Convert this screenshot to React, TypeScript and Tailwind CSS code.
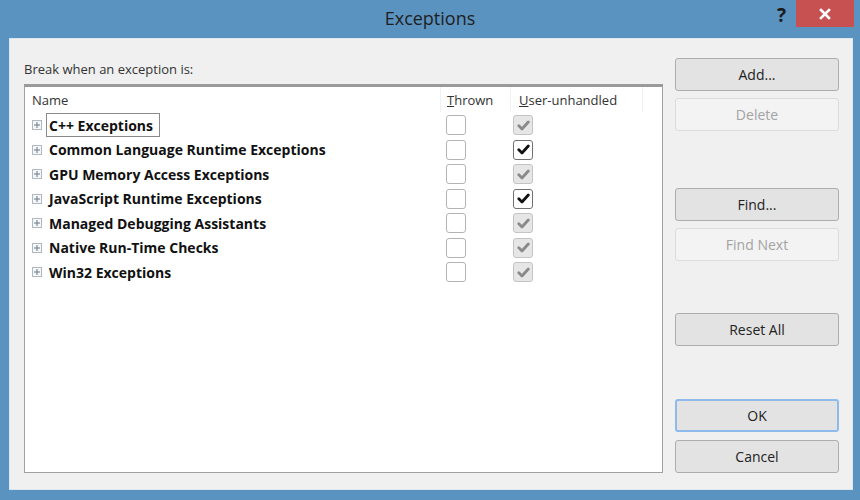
const rows: { name: string; enabled: boolean }[] = [
  { name: 'C++ Exceptions', enabled: false },
  { name: 'Common Language Runtime Exceptions', enabled: true },
  { name: 'GPU Memory Access Exceptions', enabled: false },
  { name: 'JavaScript Runtime Exceptions', enabled: true },
  { name: 'Managed Debugging Assistants', enabled: false },
  { name: 'Native Run-Time Checks', enabled: false },
  { name: 'Win32 Exceptions', enabled: false },
];

function Check({ checked, disabled }: { checked?: boolean; disabled?: boolean }) {
  return (
    <div
      className={
        'w-[20px] h-[20px] rounded-[3px] border flex items-center justify-center ' +
        (disabled ? 'bg-[#e6e6e6] border-[#c4c4c4]' : checked ? 'bg-white border-[#707070]' : 'bg-white border-[#b4b4b4]')
      }
    >
      {checked && (
        <svg width="13" height="11" viewBox="0 0 13 11">
          <path
            d="M1.8 5.8 L5 9 L11.3 2"
            fill="none"
            stroke={disabled ? '#8a8a8a' : '#111'}
            strokeWidth="2.8"
            strokeLinecap="round"
            strokeLinejoin="round"
          />
        </svg>
      )}
    </div>
  );
}

function Btn({ label, disabled, primary, className = '' }: { label: string; disabled?: boolean; primary?: boolean; className?: string }) {
  return (
    <div
      className={
        'h-[33px] w-[164px] rounded-[3px] flex items-center justify-center text-[14px] ' +
        (disabled
          ? 'border border-[#dcdcdc] bg-[#f3f3f3] text-[#a3a3a3] '
          : primary
          ? 'border-2 border-[#8ebbec] bg-[#e3e3e3] text-[#222] '
          : 'border border-[#adadad] bg-[#e3e3e3] text-[#222] ') +
        className
      }
    >
      {label}
    </div>
  );
}

export default function App() {
  return (
    <div
      className="w-[860px] h-[500px] bg-[#5b93c0] flex flex-col"
      style={{ fontFamily: '"Open Sans", "Noto Sans", sans-serif' }}
    >
      {/* Title bar */}
      <div className="h-[38px] flex items-start relative">
        <div className="absolute inset-x-0 top-[5px] text-center text-[18px] text-[#1e1e1e]">Exceptions</div>
        <div className="ml-auto flex items-start">
          <div className="text-[19px] font-bold text-[#1a1a1a] mt-[1px] mr-[10px]">?</div>
          <div className="w-[58px] h-[27px] bg-[#c75050] flex items-center justify-center mr-[6px]">
            <svg width="12" height="12" viewBox="0 0 12 12">
              <path d="M2 2 L10 10 M10 2 L2 10" stroke="#fff" strokeWidth="2.6" strokeLinecap="square" />
            </svg>
          </div>
        </div>
      </div>

      {/* Client area */}
      <div className="ml-[9px] mr-[7px] h-[452px] bg-[#f0f0f0] border border-[#dce6ef] flex pl-[14px] pr-[13px] pt-[19px] pb-[16px]">
        <div className="flex-1 flex flex-col">
          <div className="text-[13px] text-[#333] h-[26px] pt-[2px]">Break when an exception is:</div>
          <div className="flex-1 bg-white border border-[#a0a0a0] border-t-[3px] border-t-[#9a9a9a] mr-[12px] flex flex-col">
            {/* header */}
            <div className="h-[25px] flex text-[13px] text-[#333]">
              <div className="w-[416px] pl-[7px] pt-[4px] border-r border-[#eef2f6]">Name</div>
              <div className="w-[70px] pl-[6px] pt-[4px] border-r border-[#eef2f6]">
                <span className="underline">T</span>hrown
              </div>
              <div className="w-[132px] pl-[8px] pt-[4px] border-r border-[#eef2f6]">
                <span className="underline">U</span>ser-unhandled
              </div>
            </div>
            {/* rows */}
            <div className="pt-[1px]">
              {rows.map((r, i) => (
                <div key={r.name} className="h-[24.5px] flex items-center relative">
                  <div className="w-[416px] flex items-center pl-[7px]">
                    <div className="w-[10px] h-[10px] border border-[#b0b8c0] bg-[#f4f6f8] flex items-center justify-center">
                      <svg width="6" height="6" viewBox="0 0 6 6">
                        <path d="M0 3 H6 M3 0 V6" stroke="#6a7a8a" strokeWidth="1" />
                      </svg>
                    </div>
                    <div
                      className={
                        'ml-[4px] text-[14px] font-bold text-[#111] px-[2px] h-[24px] flex items-center ' +
                        (i === 0 ? 'border border-[#8a8a8a] w-[114px]' : 'border border-transparent')
                      }
                    >
                      {r.name}
                    </div>
                  </div>
                  <div className="w-[70px] pl-[5px]">
                    <Check />
                  </div>
                  <div className="w-[132px] pl-[2px]">
                    <Check checked disabled={!r.enabled} />
                  </div>
                </div>
              ))}
            </div>
          </div>
        </div>

        {/* Buttons */}
        <div className="flex flex-col">
          <Btn label="Add..." />
          <Btn label="Delete" disabled className="mt-[7px]" />
          <Btn label="Find..." className="mt-[57px]" />
          <Btn label="Find Next" disabled className="mt-[7px]" />
          <Btn label="Reset All" className="mt-[52px]" />
          <Btn label="OK" primary className="mt-[53px]" />
          <Btn label="Cancel" className="mt-[8px]" />
        </div>
      </div>
    </div>
  );
}
